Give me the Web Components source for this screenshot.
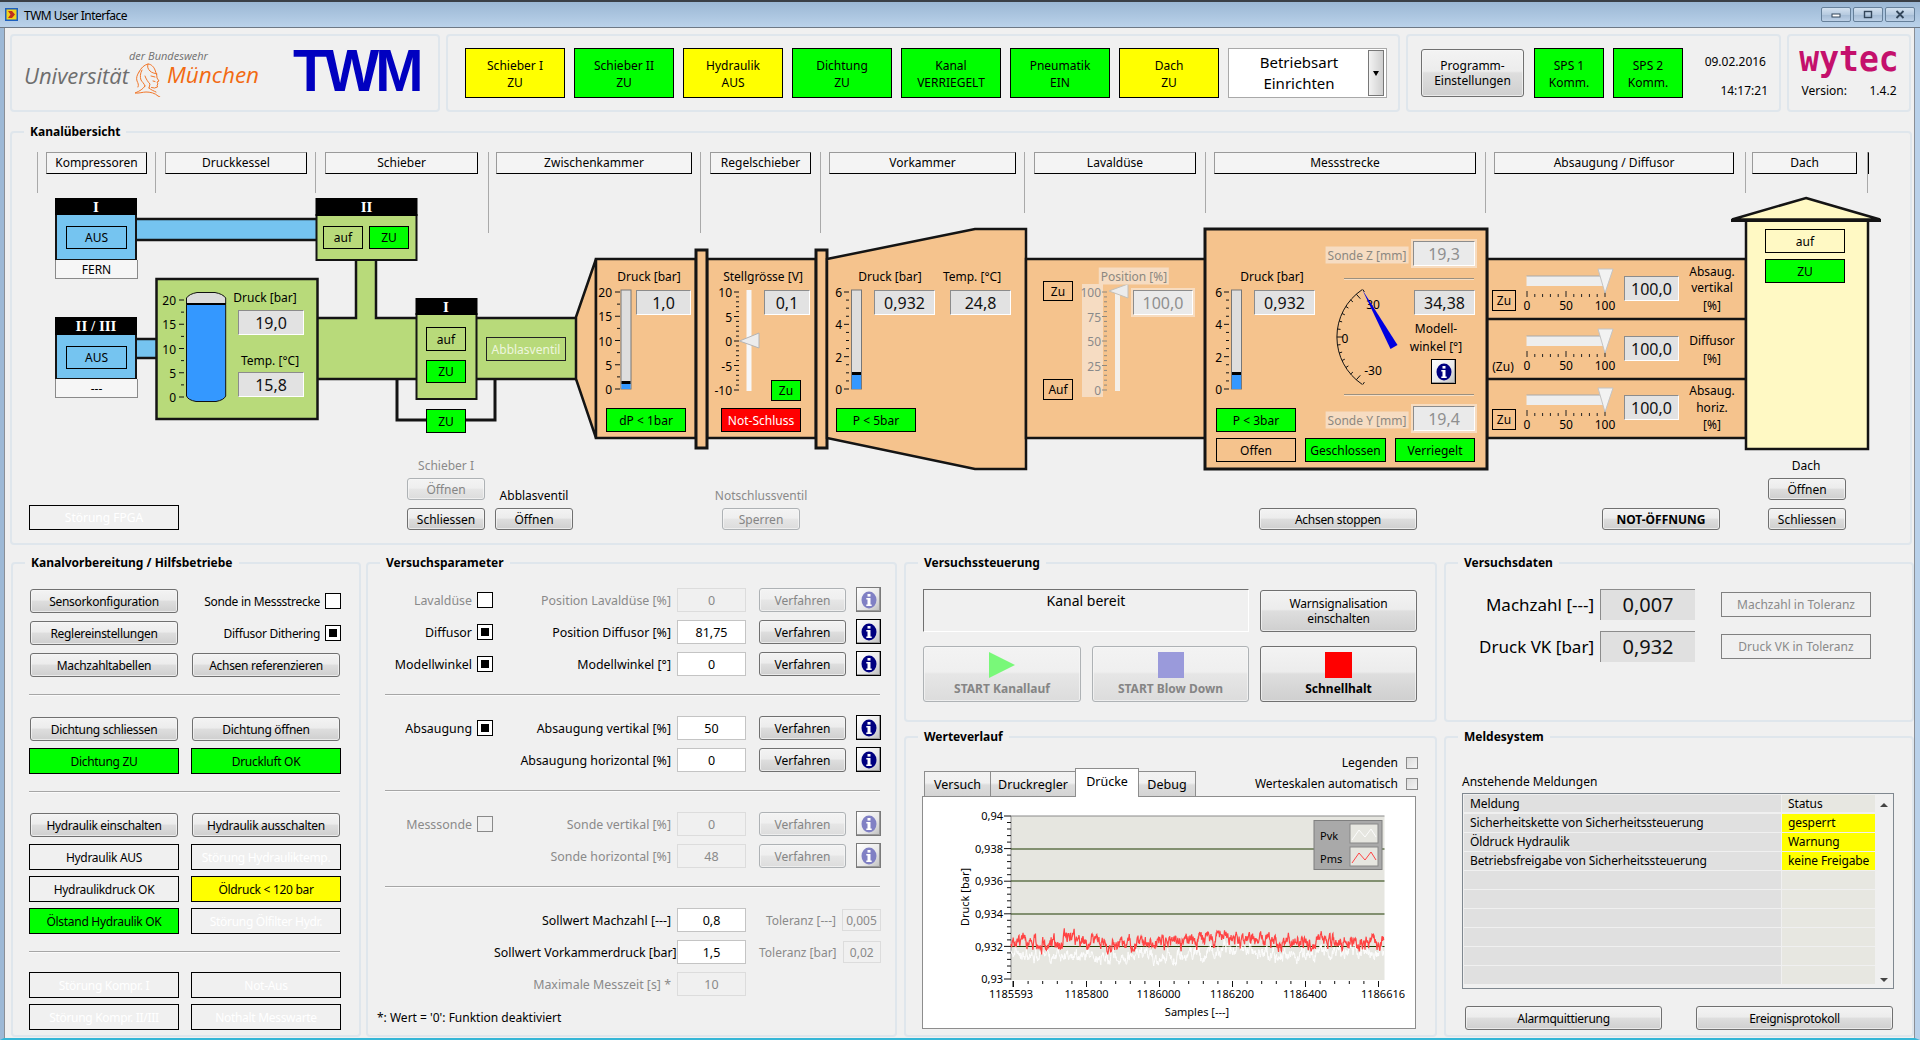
<!DOCTYPE html>
<html lang="de">
<head>
<meta charset="utf-8">
<title>TWM User Interface</title>
<style>
  html, body { margin: 0; background: #f0f0f0; }
  body { width: 1920px; height: 1040px; overflow: hidden; }
</style>
</head>
<body>
<twm-window>
  <twm-header></twm-header>
  <twm-overview></twm-overview>
  <twm-bottom></twm-bottom>
</twm-window>
<script>
const FONT = `"Noto Sans", "Open Sans", sans-serif`;

class Base extends HTMLElement {
  constructor() {
    super();
    this.attachShadow({ mode: "open" });
  }
  connectedCallback() {
    this.shadowRoot.innerHTML = `<style>${this.constructor.styles}</style>${this.markup()}`;
  }
  markup() { return `<slot></slot>`; }
}

class TwmWindow extends Base {
  static get styles() {
    return /* css */`
      :host {
        display: flex; flex-direction: column; box-sizing: border-box;
        width: 1920px; height: 1040px; background: #f0f0f0; color: #000;
        font: 12px ${FONT};
        border-left: 4px solid #9db9d6; border-right: 5px solid #b9d1ea;
        border-bottom: 2px solid #35b6d6;
      }
      .title {
        display: flex; align-items: flex-start; box-sizing: border-box;
        height: 28px; margin: 0 -5px 0 -4px; padding: 6px 6px 0 5px;
        border-top: 2px solid #3a3f46; border-bottom: 1px solid #6d7885;
        background: linear-gradient(#9bb7d4, #bad2ea);
      }
      .title span { margin: 1px 0 0 6px; line-height: 14px; flex: 1; letter-spacing: -.5px; }
      .title svg { display: block; }
      .btns { display: flex; gap: 2px; margin: -1px -1px 0 0; }
      .btns div {
        width: 30px; height: 15px; box-sizing: border-box; display: flex;
        align-items: center; justify-content: center;
        border: 1px solid #66809a; border-radius: 2px;
        background: linear-gradient(#d3e1ef 0, #b7cbe0 50%, #a4bbd4 51%, #bcd0e6 100%);
      }
      .body { flex: 1; display: flex; flex-direction: column; box-shadow: inset 1px 0 0 #8a8f96, inset -1px 0 0 #8a8f96; }
    `;
  }
  markup() {
    return /* html */`
      <div class="title">
        <svg width="13" height="13" viewBox="0 0 13 13">
          <rect width="13" height="13" fill="#1c5fc0"/>
          <rect x="1.5" y="1.5" width="10" height="10" fill="#f2d21a"/>
          <path d="M3 3h4l3 3.5-3 3.5H3l2.5-3.5z" fill="#c0301c"/>
        </svg>
        <span>TWM User Interface</span>
        <div class="btns">
          <div><svg width="10" height="7"><rect x="1" y="3" width="8" height="3" fill="#fff" stroke="#33465a"/></svg></div>
          <div><svg width="10" height="9"><rect x="1.5" y="1.5" width="7" height="6" fill="none" stroke="#33465a" stroke-width="1.4"/></svg></div>
          <div><svg width="10" height="9"><path d="M1.5 1l7 7M8.5 1l-7 7" stroke="#33465a" stroke-width="1.8" fill="none"/></svg></div>
        </div>
      </div>
      <div class="body"><slot></slot></div>`;
  }
}

class TwmGroup extends Base {
  static get styles() {
    return /* css */`
      :host { display: block; box-sizing: border-box; }
      fieldset {
        box-sizing: border-box; height: 100%; margin: 0; padding: 0;
        border: 2px solid #dfe6ec; border-radius: 4px; min-width: 0;
      }
      legend { font-weight: 700; line-height: 16px; padding: 0 6px; margin-left: 12px; }
    `;
  }
  markup() {
    return `<fieldset><legend>${this.getAttribute("label") || ""}</legend><slot></slot></fieldset>`;
  }
}

class TwmPanel extends Base {
  static get styles() {
    return /* css */`
      :host {
        display: flex; box-sizing: border-box; height: 78px;
        border: 2px solid #dfe6ec; border-radius: 4px;
      }
    `;
  }
}

class TwmButton extends Base {
  static get styles() {
    return /* css */`
      :host {
        display: inline-flex; align-items: center; justify-content: center; text-align: center;
        box-sizing: border-box; height: 24px; line-height: 15px; color: #000;
        border: 1px solid #707070; border-radius: 3px;
        background: linear-gradient(#f3f3f3 0, #ececec 46%, #dedede 50%, #cfcfcf 100%);
        box-shadow: inset 0 0 0 1px #f8f8f8aa;
      }
      :host([disabled]) {
        color: #858585; border-color: #aeb2b5;
        background: linear-gradient(#f3f3f3 0, #efefef 46%, #e6e6e6 50%, #dcdcdc 100%);
      }
      :host([bold]) { font-weight: 700; }
    `;
  }
}

class TwmLamp extends Base {
  static get styles() {
    return /* css */`
      :host {
        display: flex; align-items: center; justify-content: center; text-align: center;
        box-sizing: border-box; height: 26px; line-height: 17px;
        border: 1px solid #000; color: #000; white-space: pre-line;
      }
      :host([kind="green"]) { background: #00ff00; }
      :host([kind="yellow"]) { background: #ffff00; }
      :host([kind="red"]) { background: #ff0000; color: #fff; }
      :host([kind="off"]) { color: #fff; }
      :host([kind="grey"]) { color: #8a8a8a; border-color: #808080; }
      :host([kind="soft"]) { color: #eef6df; border-color: #222; }
    `;
  }
}

class TwmSection extends Base {
  static get styles() {
    return /* css */`
      :host { display: block; position: relative; box-sizing: border-box; flex: none; }
      .sep { position: absolute; left: 0; top: 0; width: 1px; background: #a9a9a9; }
      .lab {
        display: flex; align-items: center; justify-content: center; box-sizing: border-box;
        height: 22px; background: #f4f4f4; padding-bottom: 2px;
        border: 1px solid #9a9a9a; border-right-color: #000; border-bottom-color: #000;
      }
    `;
  }
  markup() {
    const [w, off, lab, sep] = this.getAttribute("geo").split(",").map(Number);
    this.style.width = w + "px";
    return `<div class="sep" style="height:${sep}px"></div>
      <div class="lab" style="margin-left:${off}px;width:${lab}px"><slot></slot></div>`;
  }
}

class TwmNum extends Base {
  static get styles() {
    return /* css */`
      :host {
        display: flex; align-items: center; justify-content: center; box-sizing: border-box;
        height: 25px; font-size: 16px; line-height: 20px; background: #e2e2e2; color: #111;
        border: 1px solid #fff; border-top-color: #8c8c8c; border-left-color: #8c8c8c;
      }
      :host([dim]) { color: #8f8f8f; background: #eaeaea; box-shadow: 0 0 0 2px #f7dcc0; }
      :host([big]) { font-size: 20px; border-right: 0; border-bottom: 0; background: #e0e0e0; }
    `;
  }
}

class TwmField extends Base {
  static get styles() {
    return /* css */`
      :host {
        display: flex; align-items: center; justify-content: center; box-sizing: border-box;
        height: 24px; background: #fff; border: 1px solid #c4c4c4; font-size: 12.5px;
      }
      :host([disabled]) { background: #f0f0f0; color: #8a8a8a; border-color: #dcdcdc; }
    `;
  }
}

class TwmCheck extends Base {
  static get styles() {
    return /* css */`
      :host {
        display: inline-flex; align-items: center; justify-content: center; box-sizing: border-box;
        width: 16px; height: 16px; background: #fff; border: 1px solid #000; flex: none;
      }
      :host([checked])::before { content: ""; width: 8px; height: 8px; background: #000; }
      :host([disabled]) { background: #f0f0f0; border-color: #8a8a8a; }
      :host([small]) {
        width: 12px; height: 12px; border-color: #8a8a8a;
        background: linear-gradient(135deg, #dcdcdc, #f4f4f4);
      }
    `;
  }
}

class TwmInfo extends Base {
  static get styles() {
    return /* css */`
      :host {
        display: inline-flex; align-items: center; justify-content: center; box-sizing: border-box;
        width: 25px; height: 25px; border: 1px solid #000; flex: none;
        background: linear-gradient(135deg, #fff, #e8e8e8 60%, #bdbdbd);
        box-shadow: inset -1px -1px 0 #9a9a9a;
      }
      :host([disabled]) { border-color: #7a7a7a; }
      svg { display: block; }
    `;
  }
  markup() {
    const c = this.hasAttribute("disabled") ? "#8080c4" : "#000080";
    return `<svg width="16" height="18" viewBox="0 0 16 18"><ellipse cx="8" cy="9" rx="7.5" ry="8.5" fill="${c}"/>
      <rect x="6.5" y="3" width="3" height="2.6" fill="#fff"/>
      <path d="M5.3 7h4.2v6.4h1.2V15H5.3v-1.6h1.2V8.6H5.3z" fill="#fff"/></svg>`;
  }
}

class TwmHr extends Base {
  static get styles() {
    return `:host { display: block; height: 1px; background: #a6a6a6; box-shadow: 0 1px 0 #fafafa; }`;
  }
  markup() { return ""; }
}

/* Kopfzeile */
class TwmHeader extends Base {
  static get styles() {
    return /* css */`
      :host { display: flex; height: 78px; margin: 6px 0 0 6px; gap: 6px; }
      .logo { width: 430px; align-items: flex-start; }
      .uni {
        display: grid; grid-template-columns: 110px 33px auto; grid-template-rows: 18px 38px;
        margin: 12px 0 0 12px; width: 270px;
        font-family: "Open Sans", "Noto Sans", sans-serif; font-style: italic;
      }
      .der { grid-column: 2 / 4; color: #6f6f6f; font-size: 11px; line-height: 14px; margin: 1px 0 0 -5px; white-space: nowrap; }
      .u { grid-column: 1; font-size: 22px; line-height: 24px; color: #6e6e6e; margin-top: -3px; white-space: nowrap; width: 104px; }
      .head { grid-column: 2; margin-top: -3px; }
      .m { grid-column: 3; font-size: 22.5px; line-height: 24px; color: #f26a12; margin-top: -3px; }
      .twm {
        font: 700 58px/78px "Liberation Sans", Arial, sans-serif; color: #0000c0;
        letter-spacing: -4px; margin: -4px 0 0 -1px; transform-origin: left center; transform: scaleY(1.02);
      }
      .tiles { width: 954px; padding: 12px 0 0 17px; gap: 9px; }
      .tile { width: 100px; height: 50px; padding-top: 2px; }
      .combo {
        display: flex; box-sizing: border-box; width: 159px; height: 50px; background: #fff;
        border: 1px solid #a9a9a9; padding: 1px;
      }
      .combo .txt { flex: 1; text-align: center; font-size: 15px; line-height: 21px; padding-top: 2px; }
      .combo .arr {
        width: 16px; box-sizing: border-box; border: 1px solid #777; display: flex; align-items: center; justify-content: center;
        background: linear-gradient(90deg, #f2f2f2, #cfcfcf); margin-right: 1px;
      }
      .arr i { border: 3.5px solid transparent; border-top: 5px solid #000; border-bottom: 0; }
      .prog { width: 375px; padding: 12px 0 0 13px; }
      .prog twm-button { width: 103px; height: 48px; margin: 1px 10px 0 0; }
      .sps { width: 70px; height: 50px; margin-right: 9px; padding-top: 2px; }
      .date { margin-left: 12px; width: 64px; display: flex; flex-direction: column; justify-content: space-between; text-align: right; height: 46px; padding-top: 5px; }
      .date span:first-child { margin-right: 2px; }
      .wy { width: 124px; flex-direction: column; align-items: center; }
      .brand {
        font: 700 33px/34px "DejaVu Sans Mono", monospace; color: #c4106c; margin-top: 4px;
        transform: scaleY(1.1); transform-origin: center top; letter-spacing: 0;
      }
      .ver { display: flex; justify-content: space-between; width: 95px; margin-top: 9px; line-height: 16px; }
    `;
  }
  markup() {
    const tiles = [["yellow", "Schieber I\nZU"], ["green", "Schieber II\nZU"], ["yellow", "Hydraulik\nAUS"], ["green", "Dichtung\nZU"],
      ["green", "Kanal\nVERRIEGELT"], ["green", "Pneumatik\nEIN"], ["yellow", "Dach\nZU"]];
    return /* html */`
      <twm-panel class="logo">
        <div class="uni">
          <div></div><div class="der">der Bundeswehr</div>
          <div class="u">Universität</div>
          <div class="head">
            <svg width="29" height="34" viewBox="0 0 29 34" fill="none" stroke="#f0772a" stroke-width="1" stroke-linecap="round">
              <path d="M5 9C7 5 10 2 14 1c3 0 6 3 7 6 1 3 2 5 2 8l2 3-2 1 1 2-1 1 .5 2-3 1-3-.5"/>
              <path d="M14 1c-1 3 0 5 2 7 2 2 4 2 7 3"/>
              <path d="M5 9c-2 3-3 6-2 9 1 2 2 4 1 6M8 7c-2 4-2 7-1 10 1 2 3 3 4 6"/>
              <path d="M11 13c1 3 3 6 5 8l-1 4"/>
              <path d="M17 13l4 1M19 18l2 .5"/>
              <path d="M11 23c-2 3-5 5-10 7 4 .5 8-1 11-1 4 0 9 1 12 4l2 1"/>
              <path d="M15 25c2 2 5 3 7 4"/>
            </svg>
          </div>
          <div class="m">München</div>
        </div>
        <div class="twm">TWM</div>
      </twm-panel>
      <twm-panel class="tiles">
        ${tiles.map(([k, t]) => `<twm-lamp class="tile" kind="${k}">${t}</twm-lamp>`).join("")}
        <div class="combo"><div class="txt">Betriebsart<br>Einrichten</div><div class="arr"><i></i></div></div>
      </twm-panel>
      <twm-panel class="prog">
        <twm-button>Programm-<br>Einstellungen</twm-button>
        <twm-lamp class="sps" kind="green">SPS 1
Komm.</twm-lamp>
        <twm-lamp class="sps" kind="green">SPS 2
Komm.</twm-lamp>
        <div class="date"><span>09.02.2016</span><span>14:17:21</span></div>
      </twm-panel>
      <twm-panel class="wy">
        <div class="brand">wytec</div>
        <div class="ver"><span>Version:</span><span>1.4.2</span></div>
      </twm-panel>`;
  }
}

/* Kanaluebersicht: das Anlagenschema ist eine freie Zeichenflaeche */
const OX = 12, OY = 174;
const at = (x, y, w, h) => `position:absolute;left:${x - OX}px;top:${y - OY}px;width:${w}px;height:${h}px`;
const lamp = (x, y, w, h, kind, txt) => `<twm-lamp kind="${kind}" style="${at(x, y, w, h)}">${txt}</twm-lamp>`;
const num = (x, y, w, v, dim) => `<twm-num ${dim ? "dim" : ""} style="${at(x, y, w, 25)}">${v}</twm-num>`;
const txt = (x, y, s, a = "c", cls = "") => {
  const tx = a === "c" ? "-50%" : a === "r" ? "-100%" : "0";
  return `<span class="t ${cls}" style="left:${x - OX}px;top:${y - OY}px;transform:translate(${tx},-50%)">${s}</span>`;
};
const vticks = (x, top, bot, majors, minors, lm, ln) => {
  let d = "";
  const step = (bot - top) / (majors - 1);
  for (let i = 0; i < majors; i++) {
    const y = top + i * step;
    d += `M${x - lm} ${y}H${x}`;
    if (i < majors - 1) for (let j = 1; j <= minors; j++) {
      const ym = y + j * step / (minors + 1);
      d += `M${x - ln} ${ym}H${x}`;
    }
  }
  return d;
};

class TwmOverview extends Base {
  static get styles() {
    return /* css */`
      :host { display: block; width: 1902px; height: 421px; margin: 12px 0 0 6px; flex: none; }
      .row { display: flex; margin: 12px 0 0 25px; height: 22px; }
      .canvas { position: relative; width: 1898px; height: 368px; }
      .canvas > svg { position: absolute; left: 0; top: 0; }
      .t { position: absolute; white-space: nowrap; line-height: 15px; }
      .dim { color: #8a8a8a; }
      .fade { color: #8c8880; background: #f6dcc2; padding: 1px 2px; }
      .head { color: #fff; font: 700 15px/15px "Liberation Serif", serif; }
      .white { color: #fff; }
    `;
  }
  markup() {
    const sections = [["Kompressoren", 118, 9, 101, 41], ["Druckkessel", 160, 10, 142, 41], ["Schieber", 173, 10, 153, 41],
      ["Zwischenkammer", 212, 8, 196, 81], ["Regelschieber", 120, 10, 101, 81], ["Vorkammer", 204, 9, 187, 81],
      ["Lavaldüse", 181, 10, 162, 61], ["Messstrecke", 280, 9, 262, 61], ["Absaugung / Diffusor", 260, 9, 240, 61],
      ["Dach", 122, 7, 105, 41], ["", 1, 0, 0, 41]];
    const sec = sections.map(([t, w, o, l, s]) => t
      ? `<twm-section geo="${w},${o},${l},${s}">${t}</twm-section>`
      : `<twm-section geo="1,0,0,${s}" style="overflow:visible"></twm-section>`).join("");
    return /* html */`
      <twm-group label="Kanalübersicht" style="height:100%">
        <div class="row">${sec}</div>
        <div class="canvas">${this.schema()}</div>
      </twm-group>`;
  }
  schema() {
    const G = "#b8da7a", B = "#75c4f0", O = "#f5c38d", C = "#fff9c4", K = "#141414";
    const absRows = [0, 60, 119];
    let abs = "";
    let absHtml = "";
    absRows.forEach((dy) => {
      abs += `<rect x="1526.5" y="${276 + dy}" width="78" height="10" fill="#eeeeee"/><path d="M1526.5 ${276 + dy}h78" stroke="#a8a8a8"/>`;
      let t = "";
      for (let i = 0; i <= 10; i++) {
        const x = 1527 + i * 7.8;
        t += `M${x} ${(i % 5 ? 294 : 291) + dy}V${297 + dy}`;
      }
      abs += `<path d="${t}" stroke="#222" fill="none"/>`;
      abs += `<polygon points="1598,${269 + dy} 1613,${269 + dy} 1605,${293 + dy}" fill="#f2f2f2" stroke="#c4c4c4"/>`;
      absHtml += txt(1527, 305 + dy, "0") + txt(1566, 305 + dy, "50") + txt(1605, 305 + dy, "100");
      absHtml += num(1624, 276 + dy, 55, "100,0");
    });
    const svg = /* html */`
      <svg width="1898" height="368" viewBox="${OX} ${OY} 1898 368">
        <g stroke="${K}" stroke-width="2.5">
          <rect x="130" y="219" width="190" height="21" fill="${B}"/>
          <rect x="130" y="339" width="30" height="19" fill="${B}"/>
          <path d="M310 318H356V258H376V318H580V379H310Z" fill="${G}"/>
          <path d="M397 379V420H495V379" fill="none" stroke-width="3"/>
          <rect x="56" y="214" width="80" height="46" fill="${B}" stroke-width="2"/>
          <rect x="56" y="334" width="80" height="45" fill="${B}" stroke-width="2"/>
          <rect x="316.5" y="215" width="100" height="45" fill="${G}" stroke-width="2"/>
          <rect x="416.5" y="314" width="60" height="85" fill="${G}" stroke-width="2"/>
          <rect x="156.5" y="279" width="161" height="140" fill="${G}"/>
          <path d="M576 317L596 259V438L576 379Z" fill="${O}"/>
          <rect x="596" y="259" width="100" height="179" fill="${O}"/>
          <rect x="707" y="259" width="109" height="179" fill="${O}"/>
          <rect x="696" y="250" width="11" height="198" fill="${O}" stroke-width="3"/>
          <rect x="816" y="250" width="11" height="198" fill="${O}" stroke-width="3"/>
          <path d="M827 259L975 229H1026V469H975L827 438Z" fill="${O}"/>
          <rect x="1026" y="259" width="180" height="179" fill="${O}"/>
          <rect x="1487" y="259" width="259" height="179" fill="${O}"/>
          <path d="M1487 319H1746M1487 379H1746" fill="none"/>
          <rect x="1205" y="229" width="282" height="240" fill="${O}" stroke-width="3"/>
          <rect x="1746" y="220" width="122" height="229" fill="${C}"/>
          <path d="M1806 198L1880 219.5H1732Z" fill="${C}"/>
          <path d="M1731 220.5H1881" stroke-width="3"/>
        </g>
        <rect x="55" y="198" width="82" height="17"/>
        <rect x="55" y="317" width="82" height="18"/>
        <rect x="315.5" y="198" width="102" height="18"/>
        <rect x="415.5" y="298" width="62" height="17"/>
        <!-- Kessel -->
        <path d="M186.5 304V298Q189 294 197 292.5H215Q223 294 225.7 298V304Z" fill="#dcdcdc" stroke="#111"/>
        <path d="M186.5 304.5V396Q188 400 196 401.5H216Q224 400 225.7 396V304.5Z" fill="#3498ff" stroke="#111"/>
        <path d="M186.5 304H225.7" stroke="#000" stroke-width="2"/>
        <path d="${vticks(184, 300, 397, 5, 1, 5, 3)}" stroke="#111" fill="none"/>
        <!-- Druck Zwischenkammer -->
        <path d="${vticks(620, 292, 389, 5, 1, 5, 3)}" stroke="#111" fill="none"/>
        <rect x="621" y="290" width="10" height="99" fill="#dedede" stroke="#777"/>
        <rect x="621.5" y="383" width="9" height="6" fill="#3498ff"/><rect x="621.5" y="381" width="9" height="3"/>
        <!-- Regelschieber -->
        <path d="${vticks(739, 292, 390, 5, 4, 5, 3)}" stroke="#111" fill="none"/>
        <rect x="746.5" y="290" width="5" height="101" fill="#f7f7f7"/>
        <polygon points="739.5,341 759,333 759,348" fill="#ececec" stroke="#b4b4b4"/>
        <!-- Vorkammer -->
        <path d="${vticks(849, 292, 389, 4, 3, 5, 3)}" stroke="#111" fill="none"/>
        <rect x="851.5" y="290" width="10" height="99" fill="#dedede" stroke="#777"/>
        <rect x="852" y="375" width="9" height="14" fill="#3498ff"/><rect x="852" y="372" width="9" height="3"/>
        <!-- Lavalduese -->
        <rect x="1082" y="284" width="21" height="113" fill="#f6dcc2"/>
        <path d="${vticks(1107, 292, 390, 5, 4, 5, 3)}" stroke="#8c8880" fill="none"/>
        <rect x="1115" y="290" width="5" height="101" fill="#f4efe8"/>
        <polygon points="1109,291 1128,284 1128,298" fill="#ececec" stroke="#c4c0b8"/>
        <!-- Messstrecke -->
        <path d="${vticks(1229, 292, 389, 4, 3, 5, 3)}" stroke="#111" fill="none"/>
        <rect x="1231.5" y="290" width="10" height="99" fill="#dedede" stroke="#777"/>
        <rect x="1232" y="375" width="9" height="14" fill="#3498ff"/><rect x="1232" y="372" width="9" height="3"/>
        <path d="M1344 279H1474M1344 395H1474" stroke="#fbfbfb" stroke-width="1"/>
        <path d="M1344 278.5H1474M1344 394.5H1474" stroke="#9a9080" stroke-width="1"/>
        ${this.gaugeArc()}
        ${abs}
      </svg>`;
    return svg + [
      txt(96, 206.5, "I", "c", "head"), txt(366.5, 207, "II", "c", "head"), txt(96, 326, "II / III", "c", "head"), txt(446, 306.5, "I", "c", "head"),
      lamp(66, 226, 61, 23, "clear", "AUS"), lamp(66, 346, 61, 23, "clear", "AUS"),
      `<twm-lamp kind="white" style="${at(55, 260, 83, 19)};background:#f6f6f6;border-color:#8a8a8a;border-top:0">FERN</twm-lamp>`,
      `<twm-lamp kind="white" style="${at(55, 379, 83, 19)};background:#f6f6f6;border-color:#8a8a8a;border-top:0">---</twm-lamp>`,
      lamp(323, 226, 40, 23, "clear", "auf"), lamp(369, 226, 40, 23, "green", "ZU"),
      lamp(426, 327, 40, 24, "clear", "auf"), lamp(426, 360, 40, 23, "green", "ZU"), lamp(426, 409, 40, 24, "green", "ZU"),
      lamp(486, 337, 80, 24, "soft", "Abblasventil"),
      ...[["20", 300], ["15", 324], ["10", 349], ["5", 373], ["0", 397]].map(([s, y]) => txt(176, y, s, "r")),
      txt(265, 297, "Druck [bar]"), num(238, 310, 66, "19,0"), txt(270, 360, "Temp. [°C]"), num(238, 372, 66, "15,8"),
      ...[["20", 292], ["15", 316], ["10", 341], ["5", 365], ["0", 389]].map(([s, y]) => txt(612, y, s, "r")),
      txt(649, 276, "Druck [bar]"), num(636, 290, 55, "1,0"), lamp(606, 408, 80, 24, "green", "dP &lt; 1bar"),
      txt(763, 276, "Stellgrösse [V]"),
      ...[["10", 292], ["5", 317], ["0", 341], ["-5", 366], ["-10", 390]].map(([s, y]) => txt(732, y, s, "r")),
      num(764, 290, 46, "0,1"), lamp(771, 380, 30, 21, "green", "Zu"), lamp(721, 408, 80, 24, "red", "Not-Schluss"),
      txt(890, 276, "Druck [bar]"), txt(972, 276, "Temp. [°C]"),
      ...[["6", 292], ["4", 324], ["2", 357], ["0", 389]].map(([s, y]) => txt(842, y, s, "r")),
      num(874, 290, 61, "0,932"), num(950, 290, 61, "24,8"), lamp(836, 408, 80, 24, "green", "P &lt; 5bar"),
      lamp(1043, 281, 30, 20, "clear", "Zu"), lamp(1043, 379, 30, 21, "clear", "Auf"),
      txt(1134, 276, "Position [%]", "c", "fade"),
      ...[["100", 292], ["75", 317], ["50", 341], ["25", 366], ["0", 390]].map(([s, y]) => txt(1101, y, s, "r", "dim")),
      num(1133, 290, 60, "100,0", true),
      txt(1367, 255, "Sonde Z [mm]", "c", "fade"), num(1413, 241, 62, "19,3", true),
      txt(1272, 276, "Druck [bar]"), num(1254, 290, 61, "0,932"),
      ...[["6", 292], ["4", 324], ["2", 357], ["0", 389]].map(([s, y]) => txt(1222, y, s, "r")),
      txt(1373, 304, "30"), txt(1345, 338, "0"), txt(1373, 370, "-30"),
      `<svg style="${at(1355, 285, 50, 70)}" viewBox="1355 285 50 70"><polygon points="1362.5,290 1397.5,345.1 1390.5,348.9" fill="#0000e0"/></svg>`,
      num(1414, 290, 61, "34,38"), txt(1436, 328, "Modell-"), txt(1436, 346, "winkel [°]"),
      `<twm-info style="${at(1431, 359, 25, 25)}"></twm-info>`,
      txt(1367, 420, "Sonde Y [mm]", "c", "fade"), num(1413, 406, 62, "19,4", true),
      lamp(1216, 408, 80, 24, "green", "P &lt; 3bar"),
      lamp(1216, 438, 80, 24, "clear", "Offen"), lamp(1305, 438, 81, 24, "green", "Geschlossen"), lamp(1395, 438, 80, 24, "green", "Verriegelt"),
      lamp(1492, 290, 24, 21, "clear", "Zu"), txt(1503, 366, "(Zu)"), lamp(1492, 409, 24, 21, "clear", "Zu"),
      absHtml,
      txt(1712, 271, "Absaug."), txt(1712, 287, "vertikal"), txt(1712, 305, "[%]"),
      txt(1712, 340, "Diffusor"), txt(1712, 358, "[%]"),
      txt(1712, 390, "Absaug."), txt(1712, 407, "horiz."), txt(1712, 424, "[%]"),
      lamp(1765, 229, 80, 24, "clear", "auf"), lamp(1765, 259, 80, 24, "green", "ZU"),
      /* Bedienelemente unter dem Schema */
      lamp(29, 505, 150, 25, "off", "Störung FPGA"),
      txt(446, 465, "Schieber I", "c", "dim"),
      `<twm-button disabled style="${at(407, 478, 78, 22)}">Öffnen</twm-button>`,
      `<twm-button style="${at(407, 508, 78, 22)}">Schliessen</twm-button>`,
      txt(534, 495, "Abblasventil"),
      `<twm-button style="${at(495, 508, 78, 22)}">Öffnen</twm-button>`,
      txt(761, 495, "Notschlussventil", "c", "dim"),
      `<twm-button disabled style="${at(722, 508, 78, 22)}">Sperren</twm-button>`,
      `<twm-button style="${at(1259, 508, 158, 22)};letter-spacing:-.3px">Achsen stoppen</twm-button>`,
      `<twm-button bold style="${at(1602, 508, 118, 22)}">NOT-ÖFFNUNG</twm-button>`,
      txt(1806, 465, "Dach"),
      `<twm-button style="${at(1768, 478, 78, 22)}">Öffnen</twm-button>`,
      `<twm-button style="${at(1768, 508, 78, 22)}">Schliessen</twm-button>`,
    ].join("");
  }
  gaugeArc() {
    const cx = 1394, cy = 337, r = 57;
    const pt = (deg, rad) => {
      const a = deg * Math.PI / 180;
      return `${(cx - rad * Math.cos(a)).toFixed(1)} ${(cy - rad * Math.sin(a)).toFixed(1)}`;
    };
    let d = `M${pt(56, r)}A${r} ${r} 0 0 0 ${pt(-56, r)}`;
    for (let v = -35; v <= 35; v += 5) {
      const deg = v * 1.62;
      const len = v % 30 === 0 ? 6 : 3;
      d += `M${pt(deg, r)}L${pt(deg, r - len)}`;
    }
    return `<path d="${d}" stroke="#111" fill="none"/>`;
  }
}

/* untere Gruppen */
class TwmBottom extends Base {
  static get styles() {
    return /* css */`
      :host { display: flex; height: 482px; margin: 10px 0 0 7px; gap: 5px; }
      .c2 { margin-left: 2px; }
      .stack { display: flex; flex-direction: column; gap: 7px; }
    `;
  }
  markup() {
    return /* html */`
      <twm-prep style="width:350px"></twm-prep>
      <twm-params style="width:531px"></twm-params>
      <div class="stack c2" style="width:533px">
        <twm-control style="height:167px"></twm-control>
        <twm-history style="height:308px"></twm-history>
      </div>
      <div class="stack c2" style="width:470px">
        <twm-data style="height:167px"></twm-data>
        <twm-messages style="height:308px"></twm-messages>
      </div>`;
  }
}

class TwmPrep extends Base {
  static get styles() {
    return /* css */`
      :host { display: block; height: 100%; }
      .wrap { display: flex; flex-direction: column; margin: 18px 0 0 16px; width: 312px; letter-spacing: -.3px; }
      .g { display: grid; grid-template-columns: 150px 150px; column-gap: 12px; row-gap: 6px; align-items: center; }
      twm-button { margin: 0 1px; }
      .t { row-gap: 8px; }
      twm-hr { width: 311px; }
      .cb { display: flex; justify-content: flex-end; align-items: center; gap: 5px; white-space: nowrap; }
      .a { margin-top: 17px; }
      .b { margin-top: 22px; }
      .mb { margin-bottom: 1px; }
    `;
  }
  markup() {
    return /* html */`
      <twm-group label="Kanalvorbereitung / Hilfsbetriebe" style="height:100%">
        <div class="wrap">
          <div class="g t">
            <twm-button>Sensorkonfiguration</twm-button><div class="cb">Sonde in Messstrecke <twm-check></twm-check></div>
            <twm-button>Reglereinstellungen</twm-button><div class="cb">Diffusor Dithering <twm-check checked></twm-check></div>
            <twm-button>Machzahltabellen</twm-button><twm-button>Achsen referenzieren</twm-button>
          </div>
          <twm-hr class="a"></twm-hr>
          <div class="g b">
            <twm-button class="mb">Dichtung schliessen</twm-button><twm-button class="mb">Dichtung öffnen</twm-button>
            <twm-lamp kind="green">Dichtung ZU</twm-lamp><twm-lamp kind="green">Druckluft OK</twm-lamp>
          </div>
          <twm-hr class="a"></twm-hr>
          <div class="g" style="margin-top:21px">
            <twm-button class="mb">Hydraulik einschalten</twm-button><twm-button class="mb">Hydraulik ausschalten</twm-button>
            <twm-lamp kind="clear">Hydraulik AUS</twm-lamp><twm-lamp kind="off">Störung Hydrauliktemp.</twm-lamp>
            <twm-lamp kind="clear">Hydraulikdruck OK</twm-lamp><twm-lamp kind="yellow">Öldruck &lt; 120 bar</twm-lamp>
            <twm-lamp kind="green">Ölstand Hydraulik OK</twm-lamp><twm-lamp kind="off">Störung Ölfilter Hydr.</twm-lamp>
          </div>
          <twm-hr class="a"></twm-hr>
          <div class="g" style="margin-top:20px">
            <twm-lamp kind="off">Störung Kompr. I</twm-lamp><twm-lamp kind="off">Not-Aus</twm-lamp>
            <twm-lamp kind="off">Störung Kompr. II/III</twm-lamp><twm-lamp kind="off">Nothalt Messwarte</twm-lamp>
          </div>
        </div>
      </twm-group>`;
  }
}

class TwmParams extends Base {
  static get styles() {
    return /* css */`
      :host { display: block; height: 100%; }
      .wrap { display: flex; flex-direction: column; margin-top: 17px; font-size: 12.4px; }
      .r {
        display: grid; height: 24px; margin-bottom: 8px; align-items: center; white-space: nowrap;
        grid-template-columns: 104px 22px 177px 6px 69px 13px 87px 10px 25px;
      }
      .l { text-align: right; }
      .cb { justify-self: end; margin-right: 1px; }
      .p { grid-column: 3; }
      .f { grid-column: 5; }
      .v { grid-column: 7; font-size: 12px; }
      .i { grid-column: 9; margin-top: -1px; }
      .dim { color: #8a8a8a; }
      twm-hr { margin: 10px 0 21px 17px; width: 495px; }
      .tol { grid-column: 7 / 10; display: flex; justify-content: flex-end; align-items: center; gap: 6px; color: #8a8a8a; font-size: 12px; }
      .tol span {
        display: flex; align-items: center; justify-content: center; width: 39px; height: 22px; box-sizing: border-box;
        border: 1px solid #dcdcdc;
      }
      .foot { margin: 5px 0 0 9px; font-size: 12px; }
    `;
  }
  row(chk, lab, name, val, off, info) {
    const d = off ? "disabled" : "";
    const c = off ? "dim" : "";
    return `<div class="r">
      ${lab ? `<div class="l ${c}">${lab}</div><twm-check class="cb" ${chk ? "checked" : ""} ${lab === "Messsonde" ? "disabled" : ""}></twm-check>` : ""}
      <div class="l p ${c}">${name}</div><twm-field class="f" ${d}>${val}</twm-field>
      <twm-button class="v" ${d}>Verfahren</twm-button><twm-info class="i" ${d}></twm-info>
    </div>`;
  }
  set(name, val, tol, tv) {
    return `<div class="r"><div class="l p">${name}</div><twm-field class="f">${val}</twm-field>
      <div class="tol">${tol}<span>${tv}</span></div></div>`;
  }
  markup() {
    return /* html */`
      <twm-group label="Versuchsparameter" style="height:100%">
        <div class="wrap">
          ${this.row(false, "Lavaldüse", "Position Lavaldüse [%]", "0", true)}
          ${this.row(true, "Diffusor", "Position Diffusor [%]", "81,75")}
          ${this.row(true, "Modellwinkel", "Modellwinkel [°]", "0")}
          <twm-hr></twm-hr>
          ${this.row(true, "Absaugung", "Absaugung vertikal [%]", "50")}
          ${this.row(false, "", "Absaugung horizontal [%]", "0")}
          <twm-hr></twm-hr>
          ${this.row(false, "Messsonde", "Sonde vertikal [%]", "0", true)}
          ${this.row(false, "", "Sonde horizontal [%]", "48", true)}
          <twm-hr></twm-hr>
          ${this.set("Sollwert Machzahl [---]", "0,8", "Toleranz [---]", "0,005")}
          ${this.set("Sollwert Vorkammerdruck [bar]", "1,5", "Toleranz [bar]", "0,02")}
          <div class="r"><div class="l p dim">Maximale Messzeit [s] *</div><twm-field class="f" disabled>10</twm-field></div>
          <div class="foot">*: Wert = '0': Funktion deaktiviert</div>
        </div>
      </twm-group>`;
  }
}

class TwmControl extends Base {
  static get styles() {
    return /* css */`
      :host { display: block; }
      .g {
        display: grid; grid-template-columns: 158px 157px 157px; column-gap: 11px; row-gap: 14px;
        grid-template-rows: 43px 56px; margin: 18px 0 0 17px;
      }
      .kb {
        grid-column: 1 / 3; box-sizing: border-box; text-align: center; font-size: 14px; line-height: 18px; padding-top: 2px;
        border: 1px solid #fff; border-top-color: #707070; border-left-color: #707070;
      }
      .w { height: 42px; align-self: end; letter-spacing: -.2px; }
      .s { height: 56px; flex-direction: column; }
      .s > span { display: flex; flex-direction: column; align-items: center; gap: 4px; font-weight: 700; line-height: 14px; font-size: 12px; }
      svg { display: block; }
    `;
  }
  markup() {
    return /* html */`
      <twm-group label="Versuchssteuerung" style="height:100%">
        <div class="g">
          <div class="kb">Kanal bereit</div>
          <twm-button class="w">Warnsignalisation<br>einschalten</twm-button>
          <twm-button class="s" disabled><span><svg width="26" height="26"><polygon points="0,0 26,13 0,26" fill="#79f879"/></svg>START Kanallauf</span></twm-button>
          <twm-button class="s" disabled><span><svg width="26" height="26"><rect width="26" height="26" fill="#9a9adb"/></svg>START Blow Down</span></twm-button>
          <twm-button class="s" bold><span><svg width="27" height="26"><rect width="27" height="26" fill="#ff0000"/></svg>Schnellhalt</span></twm-button>
        </div>
      </twm-group>`;
  }
}

class TwmChart extends Base {
  static get styles() {
    return /* css */`
      :host { display: block; box-sizing: border-box; width: 494px; height: 233px; background: #fff; border: 1px solid #8d8d8d; }
      svg { display: block; font: 11px ${FONT}; }
    `;
  }
  trace(seed, base, amp, slowAmp) {
    let s = seed;
    const rnd = () => {
      s = (s * 1664525 + 1013904223) % 4294967296;
      return s / 4294967296 - 0.5;
    };
    let v = 0, slow = 0, pts = "";
    const L = 1011, R = 1384;
    for (let x = L; x <= R; x += 0.365) {
      v = 0.72 * v + rnd() * amp;
      slow = 0.985 * slow + rnd() * slowAmp;
      pts += `${x.toFixed(2)},${(base + v + slow).toFixed(1)} `;
    }
    return pts;
  }
  markup() {
    const L = 1011, R = 1384.5, T = 816, B = 980;
    const yl = [["0,94", 816], ["0,938", 849], ["0,936", 881], ["0,934", 914], ["0,932", 946.5], ["0,93", 979]];
    const xl = [["1185593", 1011], ["1185800", 1086.5], ["1186000", 1158.6], ["1186200", 1232], ["1186400", 1305], ["1186616", 1383]];
    let ticks = "";
    for (let i = 0; i <= 25; i++) {
      const y = 816 + i * 6.52;
      ticks += `M${i % 5 ? 1007 : 1004} ${y.toFixed(1)}H1011`;
    }
    ticks += "M1013 981V987";
    for (let i = 0; i <= 25; i++) {
      const x = 1013.5 + i * 14.6;
      ticks += `M${x.toFixed(1)} 981V${i % 5 ? 984 : 987}`;
    }
    return /* html */`
      <svg width="492" height="231" viewBox="923 797 492 231">
        <rect x="${L}" y="${T}" width="${R - L}" height="${B - T}" fill="#e6e6e0"/>
        <path d="M${L} ${B}V${T}H${R}" fill="none" stroke="#8a8a8a"/>
        <path d="M${L} 849H${R}M${L} 881H${R}M${L} 914H${R}M${L} 946.5H${R}" stroke="#1f3a00"/>
        <polyline points="${this.trace(77, 953, 9, 1.2)}" fill="none" stroke="#fdfdfd" stroke-width="1"/>
        <polyline points="${this.trace(1234, 942, 10, 1.2)}" fill="none" stroke="#ff4444" stroke-width="1.2"/>
        <path d="${ticks}" stroke="#111" fill="none"/>
        ${yl.map(([s, y]) => `<text x="1003" y="${y + 4}" text-anchor="end">${s}</text>`).join("")}
        ${xl.map(([s, x]) => `<text x="${x}" y="998" text-anchor="middle">${s}</text>`).join("")}
        <text x="1197" y="1016" text-anchor="middle">Samples [---]</text>
        <text transform="translate(969 897) rotate(-90)" text-anchor="middle">Druck [bar]</text>
        <rect x="1314" y="820.5" width="68" height="49" fill="#a9a9a9" stroke="#7f7f7f"/>
        <text x="1320" y="840">Pvk</text><text x="1320" y="863">Pms</text>
        <rect x="1350" y="824" width="28" height="19" fill="#e6e6e0" stroke="#888"/>
        <rect x="1350" y="847" width="28" height="19" fill="#e6e6e0" stroke="#888"/>
        <path d="M1352 840l7-10 6 7 6-8 5 8" fill="none" stroke="#fdfdfd"/>
        <path d="M1352 863l7-10 6 7 6-8 5 8" fill="none" stroke="#ff4444"/>
      </svg>`;
  }
}

class TwmHistory extends Base {
  static get styles() {
    return /* css */`
      :host { display: block; }
      .top { display: flex; justify-content: space-between; align-items: flex-end; height: 41px; margin: 10px -3px 0 16px; width: 496px; }
      .tabs { display: flex; align-items: flex-end; height: 28px; font-size: 12.5px; }
      .tab {
        display: flex; align-items: center; justify-content: center; box-sizing: border-box; height: 25px;
        border: 1px solid #8d8d8d; border-bottom: 0; margin-left: -1px;
        background: linear-gradient(#f2f2f2, #f0f0f0 45%, #dcdcdc 55%, #d4d4d4);
      }
      .tab.on { height: 28px; background: #fff; position: relative; margin-bottom: -1px; height: 29px; padding-bottom: 3px; }
      .opt { display: grid; grid-template-columns: auto 12px; column-gap: 8px; row-gap: 4px; justify-items: end; align-items: center; margin-bottom: 4px; }
      .box { margin-left: 16px; }
    `;
  }
  markup() {
    return /* html */`
      <twm-group label="Werteverlauf" style="height:100%">
        <div class="top">
          <div class="tabs">
            <div class="tab" style="width:67px;margin-left:2px">Versuch</div>
            <div class="tab" style="width:86px">Druckregler</div>
            <div class="tab on" style="width:64px">Drücke</div>
            <div class="tab" style="width:58px">Debug</div>
          </div>
          <div class="opt">
            <span>Legenden</span><twm-check small></twm-check>
            <span>Werteskalen automatisch</span><twm-check small></twm-check>
          </div>
        </div>
        <twm-chart class="box"></twm-chart>
      </twm-group>`;
  }
}

class TwmData extends Base {
  static get styles() {
    return /* css */`
      :host { display: block; }
      .g {
        display: grid; grid-template-columns: 148px 6px 95px 26px 150px; grid-auto-rows: 31px; row-gap: 11px;
        align-items: center; margin-top: 18px;
      }
      .l { text-align: right; font-size: 17px; white-space: nowrap; }
      .v { grid-column: 3; height: 31px; }
      .k { grid-column: 5; height: 25px; }
    `;
  }
  markup() {
    return /* html */`
      <twm-group label="Versuchsdaten" style="height:100%">
        <div class="g">
          <div class="l">Machzahl [---]</div><twm-num class="v" big>0,007</twm-num><twm-lamp class="k" kind="grey">Machzahl in Toleranz</twm-lamp>
          <div class="l">Druck VK [bar]</div><twm-num class="v" big>0,932</twm-num><twm-lamp class="k" kind="grey">Druck VK in Toleranz</twm-lamp>
        </div>
      </twm-group>`;
  }
}

class TwmMessages extends Base {
  static get styles() {
    return /* css */`
      :host { display: block; }
      .wrap { margin: 29px 0 0 16px; width: 432px; }
      .cap { line-height: 16px; margin-bottom: 3px; }
      .list {
        display: grid; grid-template-columns: 317px 94px 1fr; box-sizing: border-box; height: 196px;
        border: 1px solid #808890; padding: 1px; background: #f0f0f0; line-height: 18px; letter-spacing: -.1px;
      }
      .tb { display: grid; grid-column: 1 / 3; grid-template-columns: 317px 94px; grid-auto-rows: 18px; row-gap: 1px; align-content: start; }
      .tb > div { padding-left: 6px; background: #e0e0e0; white-space: nowrap; }
      .tb > div:nth-child(2n) { background: #e7e7e1; margin-left: 1px; }
      .tb > .h { margin-bottom: 1px; }
      .tb > div.y { background: #ffff00; }
      .sb { display: flex; flex-direction: column; justify-content: space-between; align-items: center; padding: 8px 0 5px; }
      .sb i { border: 4px solid transparent; }
      .up { border-bottom: 4px solid #444 !important; border-top: 0 !important; }
      .dn { border-top: 4px solid #444 !important; border-bottom: 0 !important; }
      .btn { display: flex; justify-content: space-between; margin-top: 17px; padding: 0 1px 0 3px; letter-spacing: -.3px; }
      twm-button { width: 197px; }
    `;
  }
  markup() {
    const rows = [["Sicherheitskette von Sicherheitssteuerung", "gesperrt"], ["Öldruck Hydraulik", "Warnung"], ["Betriebsfreigabe von Sicherheitssteuerung", "keine Freigabe"]];
    let cells = `<div class="h">Meldung</div><div class="h">Status</div>`;
    rows.forEach(([a, b]) => { cells += `<div>${a}</div><div class="y">${b}</div>`; });
    for (let i = 0; i < 6; i++) cells += `<div></div><div></div>`;
    return /* html */`
      <twm-group label="Meldesystem" style="height:100%">
        <div class="wrap">
          <div class="cap">Anstehende Meldungen</div>
          <div class="list">
            <div class="tb">${cells}</div>
            <div class="sb"><i class="up"></i><i class="dn"></i></div>
          </div>
          <div class="btn"><twm-button>Alarmquittierung</twm-button><twm-button>Ereignisprotokoll</twm-button></div>
        </div>
      </twm-group>`;
  }
}

customElements.define("twm-window", TwmWindow);
customElements.define("twm-group", TwmGroup);
customElements.define("twm-panel", TwmPanel);
customElements.define("twm-button", TwmButton);
customElements.define("twm-lamp", TwmLamp);
customElements.define("twm-section", TwmSection);
customElements.define("twm-num", TwmNum);
customElements.define("twm-field", TwmField);
customElements.define("twm-check", TwmCheck);
customElements.define("twm-info", TwmInfo);
customElements.define("twm-hr", TwmHr);
customElements.define("twm-chart", TwmChart);
customElements.define("twm-prep", TwmPrep);
customElements.define("twm-params", TwmParams);
customElements.define("twm-control", TwmControl);
customElements.define("twm-history", TwmHistory);
customElements.define("twm-data", TwmData);
customElements.define("twm-messages", TwmMessages);
customElements.define("twm-bottom", TwmBottom);
customElements.define("twm-overview", TwmOverview);
customElements.define("twm-header", TwmHeader);
</script>
</body>
</html>
